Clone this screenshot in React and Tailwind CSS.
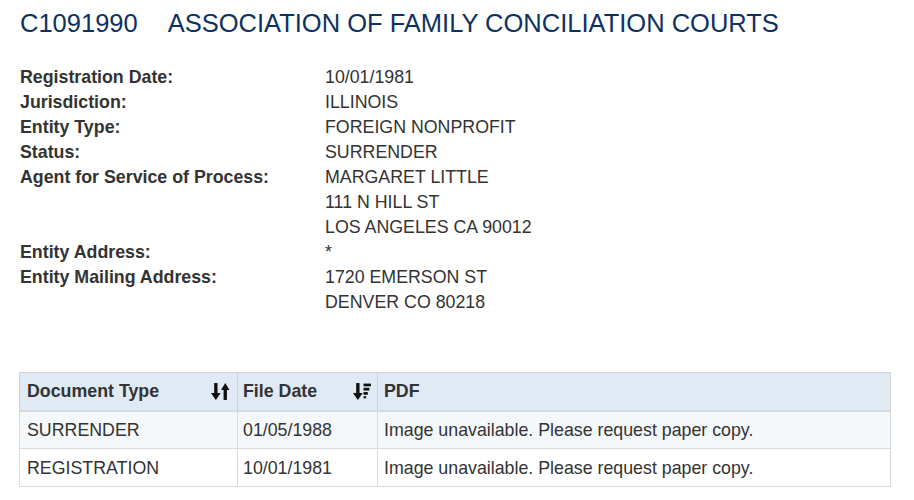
import React from "react";

const details = [
  { label: "Registration Date:", lines: ["10/01/1981"] },
  { label: "Jurisdiction:", lines: ["ILLINOIS"] },
  { label: "Entity Type:", lines: ["FOREIGN NONPROFIT"] },
  { label: "Status:", lines: ["SURRENDER"] },
  {
    label: "Agent for Service of Process:",
    lines: ["MARGARET LITTLE", "111 N HILL ST", "LOS ANGELES CA 90012"],
  },
  { label: "Entity Address:", lines: ["*"] },
  { label: "Entity Mailing Address:", lines: ["1720 EMERSON ST", "DENVER CO 80218"] },
];

const documents = [
  { type: "SURRENDER", date: "01/05/1988", pdf: "Image unavailable. Please request paper copy." },
  { type: "REGISTRATION", date: "10/01/1981", pdf: "Image unavailable. Please request paper copy." },
];

// icono de orden ambos sentidos
const SortBoth = () => (
  <svg width="19" height="19" viewBox="0 0 18 18" fill="#111">
    <rect x="3" y="1" width="3.2" height="11" />
    <polygon points="0,10.5 9.2,10.5 4.6,17" />
    <polygon points="9.5,7.5 17.5,7.5 13.5,1" />
    <rect x="11.9" y="7" width="3.2" height="10" />
  </svg>
);

// icono de orden descendente
const SortDesc = () => (
  <svg width="19" height="19" viewBox="0 0 18 18" fill="#111">
    <rect x="3" y="1" width="3.2" height="11" />
    <polygon points="0,10.5 9.2,10.5 4.6,17" />
    <rect x="10" y="1.5" width="7" height="2.6" />
    <rect x="10" y="5.5" width="5.5" height="2.6" />
    <rect x="10" y="9.5" width="4" height="2.6" />
    <rect x="10" y="13.5" width="2.5" height="2" />
  </svg>
);

export default function App() {
  return (
    <div
      className="min-h-screen bg-white text-[#333] px-[19px] pt-[5px]"
      style={{ fontFamily: '"Liberation Sans", Arial, sans-serif' }}
    >
      <h1 className="text-[25.5px] leading-[36px] text-[#0f3161] flex pl-px">
        <span>C1091990</span>
        <span className="ml-[30px]">ASSOCIATION OF FAMILY CONCILIATION COURTS</span>
      </h1>

      <div className="mt-[24px] text-[17.8px] leading-[25px] pl-px">
        {details.map((d) => (
          <div key={d.label} className="flex">
            <div className="w-[305px] font-bold">{d.label}</div>
            <div>
              {d.lines.map((l) => (
                <div key={l}>{l}</div>
              ))}
            </div>
          </div>
        ))}
      </div>

      <table className="mt-[57px] w-[872px] border-collapse border border-[#cfd3d6] text-[17.8px]">
        <thead>
          <tr className="bg-[#dfeaf4] h-[38px]">
            <th className="w-[218px] border border-[#cfd3d6] border-b-2 border-b-[#d6dadd] px-[7px] text-left font-bold">
              <div className="flex items-center justify-between">
                <span>Document Type</span>
                <SortBoth />
              </div>
            </th>
            <th className="w-[140px] border border-[#cfd3d6] border-b-2 border-b-[#d6dadd] px-[5px] text-left font-bold">
              <div className="flex items-center justify-between">
                <span>File Date</span>
                <SortDesc />
              </div>
            </th>
            <th className="border border-[#cfd3d6] border-b-2 border-b-[#d6dadd] px-[6px] text-left font-bold">
              PDF
            </th>
          </tr>
        </thead>
        <tbody>
          {documents.map((doc, i) => (
            <tr key={doc.type} className={`h-[38px] ${i % 2 === 0 ? "bg-[#f5f8fb]" : "bg-white"}`}>
              <td className="border border-[#d9dcdf] px-[7px] pt-px">{doc.type}</td>
              <td className="border border-[#d9dcdf] px-[5px] pt-px">{doc.date}</td>
              <td className="border border-[#d9dcdf] px-[6px] pt-px">{doc.pdf}</td>
            </tr>
          ))}
        </tbody>
      </table>
    </div>
  );
}
